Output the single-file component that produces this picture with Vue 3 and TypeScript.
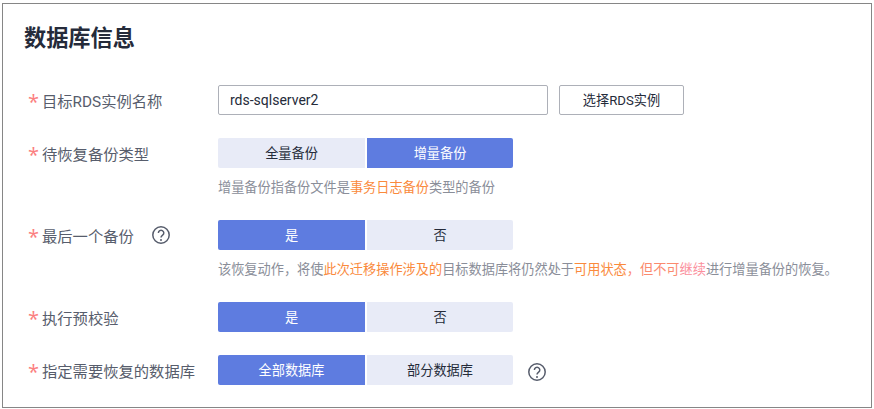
<script setup lang="ts">
interface Part {
  text: string
  tone?: 'orange' | 'salmon' | 'pink'
}

interface Row {
  label: string
  options?: string[]
  active?: number
  hint?: Part[]
  help?: boolean
  helpAfter?: boolean
}

const rows: Row[] = [
  {
    label: '待恢复备份类型',
    options: ['全量备份', '增量备份'],
    active: 1,
    hint: [
      { text: '增量备份指备份文件是' },
      { text: '事务日志备份', tone: 'orange' },
      { text: '类型的备份' },
    ],
  },
  {
    label: '最后一个备份',
    options: ['是', '否'],
    active: 0,
    help: true,
    hint: [
      { text: '该恢复动作，将使' },
      { text: '此次迁移操作涉及的', tone: 'orange' },
      { text: '目标数据库将仍然处于' },
      { text: '可用状态', tone: 'orange' },
      { text: '，但不可', tone: 'salmon' },
      { text: '继续', tone: 'pink' },
      { text: '进行增量备份的恢复。' },
    ],
  },
  { label: '执行预校验', options: ['是', '否'], active: 0 },
  {
    label: '指定需要恢复的数据库',
    options: ['全部数据库', '部分数据库'],
    active: 0,
    helpAfter: true,
  },
]
</script>

<template>
  <section class="card">
    <h2 class="title">数据库信息</h2>

    <div class="row first">
      <label class="label"><span class="star">*</span>目标RDS实例名称</label>
      <div class="field">
        <div class="line">
          <input class="input" value="rds-sqlserver2" />
          <button class="pick">选择RDS实例</button>
        </div>
      </div>
    </div>

    <div v-for="row in rows" :key="row.label" class="row">
      <label class="label">
        <span class="star">*</span>{{ row.label }}
        <svg v-if="row.help" class="help label-help" viewBox="0 0 20 20">
          <circle cx="10" cy="10" r="8.2" />
          <path d="M7.4 8a2.7 2.7 0 1 1 4.2 2.2c-1 .7-1.6 1.2-1.6 2.4" />
          <circle class="dot" cx="10" cy="14.9" r="1" />
        </svg>
      </label>
      <div class="field">
        <div class="line">
          <div class="toggle">
            <button
              v-for="(opt, i) in row.options"
              :key="opt"
              class="opt"
              :class="{ on: i === row.active }"
            >{{ opt }}</button>
          </div>
          <svg v-if="row.helpAfter" class="help after-help" viewBox="0 0 20 20">
            <circle cx="10" cy="10" r="8.2" />
            <path d="M7.4 8a2.7 2.7 0 1 1 4.2 2.2c-1 .7-1.6 1.2-1.6 2.4" />
            <circle class="dot" cx="10" cy="14.9" r="1" />
          </svg>
        </div>
        <p v-if="row.hint" class="hint">
          <span v-for="part in row.hint" :key="part.text" :class="part.tone">{{ part.text }}</span>
        </p>
      </div>
    </div>
  </section>
</template>

<style scoped>
.card {
  box-sizing: border-box;
  width: 870px;
  height: 405px;
  margin: 3px 0 0 2px;
  padding: 19px 0 0 21px;
  border: 1px solid #868686;
  background: #fff;
  font-family: Roboto, "Noto Sans CJK SC", sans-serif;
}

.title {
  margin: 0;
  height: 30px;
  font-size: 22.2px;
  line-height: 30px;
  font-weight: 700;
  color: #252b3a;
}

.row {
  display: flex;
  align-items: flex-start;
  margin-top: 23px;
}

.row.first {
  margin-top: 32px;
}

.label {
  display: flex;
  align-items: center;
  flex: none;
  width: 194px;
  height: 30px;
  padding-left: 4px;
  box-sizing: border-box;
  font-size: 15.3px;
  color: #575d6c;
  white-space: nowrap;
}

.star {
  width: 14px;
  margin-top: 3px;
  font-family: "Open Sans", sans-serif;
  font-size: 20px;
  line-height: 20px;
  color: #fb7e7e;
}

.line {
  display: flex;
  align-items: center;
}

.input {
  box-sizing: border-box;
  width: 330px;
  height: 30px;
  padding: 0 11px;
  border: 1px solid #adb0b8;
  border-radius: 2px;
  outline: none;
  font-family: inherit;
  font-size: 14px;
  color: #252b3a;
}

.pick {
  box-sizing: border-box;
  width: 125px;
  height: 30px;
  margin-left: 11px;
  padding: 0 0 2px;
  border: 1px solid #adb0b8;
  border-radius: 2px;
  background: #fff;
  font-family: inherit;
  font-size: 13.2px;
  color: #252b3a;
}

.toggle {
  display: flex;
  gap: 2px;
}

.opt {
  box-sizing: border-box;
  width: 147px;
  height: 30px;
  padding: 0 0 2px;
  border: 0;
  background: #e8ebf7;
  font-family: inherit;
  font-size: 13.2px;
  color: #252b3a;
}

.opt:first-child {
  border-radius: 2px 0 0 2px;
}

.opt:last-child {
  width: 146px;
  border-radius: 0 2px 2px 0;
}

.opt.on {
  background: #5e7ce0;
  color: #fff;
}

.hint {
  margin: 11px 0 0;
  height: 18px;
  font-size: 13.2px;
  line-height: 18px;
  color: #8a8e99;
  white-space: nowrap;
}

.orange {
  color: #fa8a3c;
}

.salmon {
  color: #fb8a6e;
}

.pink {
  color: #fb8f9c;
}

.help {
  flex: none;
  width: 20px;
  height: 20px;
  fill: none;
  stroke: #575d6c;
  stroke-width: 1.5;
}

.help .dot {
  fill: #575d6c;
  stroke: none;
}

.label-help {
  margin-left: 17px;
}

.after-help {
  margin: 4px 0 0 14px;
}
</style>

<style>
html,
body {
  background: #fff;
}
</style>
